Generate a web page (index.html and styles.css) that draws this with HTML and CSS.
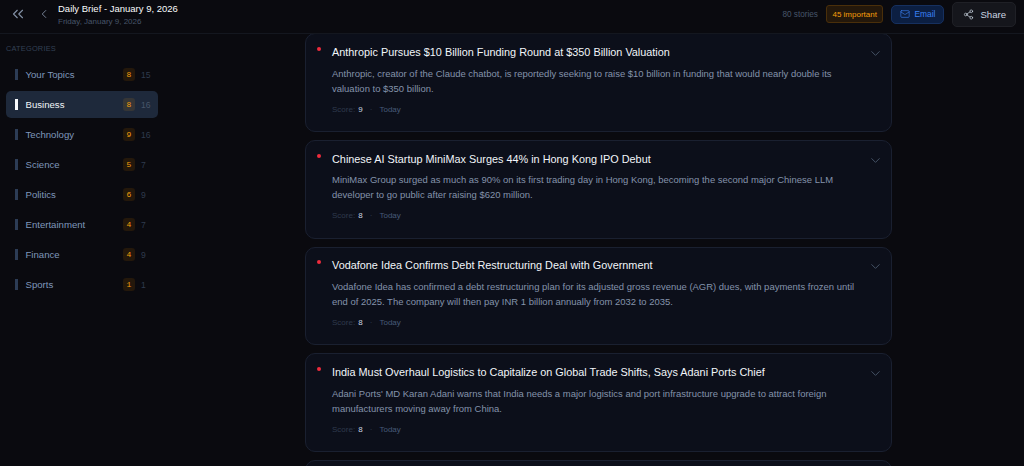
FILE: index.html
```html
<!DOCTYPE html>
<html lang="en">
<head>
    <meta charset="UTF-8">
    <meta name="viewport" content="width=device-width, initial-scale=1.0">
    <title>Daily Brief - January 9, 2026</title>
    <link rel="stylesheet" href="styles.css">
</head>
<body>
    <header class="topbar">
        <div class="topbar-left">
            <button class="nav-btn nav-collapse" aria-label="Collapse">
                <svg width="18" height="18" viewBox="0 0 24 24"><path d="m11 17-5-5 5-5"/><path d="m18 17-5-5 5-5"/></svg>
            </button>
            <button class="nav-btn nav-back" aria-label="Back">
                <svg width="14" height="14" viewBox="0 0 24 24"><path d="m15 18-6-6 6-6"/></svg>
            </button>
            <div class="brief-title">
                <h1>Daily Brief - January 9, 2026</h1>
                <p>Friday, January 9, 2026</p>
            </div>
        </div>
        <div class="topbar-right">
            <span class="story-count">80 stories</span>
            <span class="important-tag">45 important</span>
            <button class="email-btn">
                <svg width="10" height="10" viewBox="0 0 24 24"><rect x="2" y="4" width="20" height="16" rx="2"/><path d="m22 7-8.97 5.7a1.94 1.94 0 0 1-2.06 0L2 7"/></svg>
                Email
            </button>
            <button class="share-btn">
                <svg width="11" height="11" viewBox="0 0 24 24"><circle cx="18" cy="5" r="3"/><circle cx="6" cy="12" r="3"/><circle cx="18" cy="19" r="3"/><path d="m8.59 13.51 6.83 3.98"/><path d="m15.41 6.51-6.82 3.98"/></svg>
                Share
            </button>
        </div>
    </header>

    <div class="layout">
        <aside class="sidebar">
            <h2>CATEGORIES</h2>
            <a class="cat"><i></i><span class="cat-name">Your Topics</span><b>8</b><em>15</em></a>
            <a class="cat active"><i></i><span class="cat-name">Business</span><b>8</b><em>16</em></a>
            <a class="cat"><i></i><span class="cat-name">Technology</span><b>9</b><em>16</em></a>
            <a class="cat"><i></i><span class="cat-name">Science</span><b>5</b><em>7</em></a>
            <a class="cat"><i></i><span class="cat-name">Politics</span><b>6</b><em>9</em></a>
            <a class="cat"><i></i><span class="cat-name">Entertainment</span><b>4</b><em>7</em></a>
            <a class="cat"><i></i><span class="cat-name">Finance</span><b>4</b><em>9</em></a>
            <a class="cat"><i></i><span class="cat-name">Sports</span><b>1</b><em>1</em></a>
        </aside>

        <main class="feed">
            <div class="stories">
                <article class="story">
                    <span class="dot"></span>
                    <div class="story-body">
                        <h3>Anthropic Pursues $10 Billion Funding Round at $350 Billion Valuation</h3>
                        <p>Anthropic, creator of the Claude chatbot, is reportedly seeking to raise $10 billion in funding that would nearly double its valuation to $350 billion.</p>
                        <div class="meta"><span class="score">Score: <b>9</b></span><span class="sep">&middot;</span><span class="when">Today</span></div>
                    </div>
                    <svg class="chevron" width="15" height="15" viewBox="0 0 24 24"><path d="m6 9 6 6 6-6"/></svg>
                </article>
                <article class="story">
                    <span class="dot"></span>
                    <div class="story-body">
                        <h3>Chinese AI Startup MiniMax Surges 44% in Hong Kong IPO Debut</h3>
                        <p>MiniMax Group surged as much as 90% on its first trading day in Hong Kong, becoming the second major Chinese LLM developer to go public after raising $620 million.</p>
                        <div class="meta"><span class="score">Score: <b>8</b></span><span class="sep">&middot;</span><span class="when">Today</span></div>
                    </div>
                    <svg class="chevron" width="15" height="15" viewBox="0 0 24 24"><path d="m6 9 6 6 6-6"/></svg>
                </article>
                <article class="story">
                    <span class="dot"></span>
                    <div class="story-body">
                        <h3>Vodafone Idea Confirms Debt Restructuring Deal with Government</h3>
                        <p>Vodafone Idea has confirmed a debt restructuring plan for its adjusted gross revenue (AGR) dues, with payments frozen until end of 2025. The company will then pay INR 1 billion annually from 2032 to 2035.</p>
                        <div class="meta"><span class="score">Score: <b>8</b></span><span class="sep">&middot;</span><span class="when">Today</span></div>
                    </div>
                    <svg class="chevron" width="15" height="15" viewBox="0 0 24 24"><path d="m6 9 6 6 6-6"/></svg>
                </article>
                <article class="story">
                    <span class="dot"></span>
                    <div class="story-body">
                        <h3>India Must Overhaul Logistics to Capitalize on Global Trade Shifts, Says Adani Ports Chief</h3>
                        <p>Adani Ports' MD Karan Adani warns that India needs a major logistics and port infrastructure upgrade to attract foreign manufacturers moving away from China.</p>
                        <div class="meta"><span class="score">Score: <b>8</b></span><span class="sep">&middot;</span><span class="when">Today</span></div>
                    </div>
                    <svg class="chevron" width="15" height="15" viewBox="0 0 24 24"><path d="m6 9 6 6 6-6"/></svg>
                </article>
                <article class="story story-next"></article>
            </div>
        </main>
    </div>
</body>
</html>
```

FILE: styles.css
```css
* {
    box-sizing: border-box;
}
html, body {
    height: 100%;
}
body {
    margin: 0;
    overflow: hidden;
    display: flex;
    flex-direction: column;
    font-family: "Liberation Sans", Arial, sans-serif;
    background-color: #0a0a0f;
    color: #e2e8f0;
}
svg {
    fill: none;
    stroke: currentColor;
    stroke-width: 1.5;
    stroke-linecap: round;
    stroke-linejoin: round;
    flex-shrink: 0;
}
button {
    font-family: inherit;
    cursor: pointer;
}

/* top bar */
.topbar {
    flex: 0 0 33.5px;
    display: flex;
    justify-content: space-between;
    align-items: center;
    padding: 0 8px 4px 9px;
    background: #0a0a0f;
    border-bottom: 1px solid #14171f;
}
.topbar-left, .topbar-right {
    display: flex;
    align-items: center;
}
.nav-btn {
    display: flex;
    padding: 0;
    border: none;
    background: none;
    color: #8290a5;
}
.nav-collapse {
    margin-right: 10px;
}
.nav-back {
    margin-right: 7px;
}
.brief-title h1 {
    margin: 0;
    font-size: 9.5px;
    line-height: 14px;
    font-weight: 400;
    color: #f8fafc;
}
.brief-title p {
    margin: 0;
    font-size: 8px;
    line-height: 11px;
    color: #475569;
}
.story-count {
    margin-right: 8px;
    font-size: 8.2px;
    color: #475569;
}
.important-tag {
    display: flex;
    align-items: center;
    height: 18px;
    padding: 0 5.5px;
    margin-right: 8px;
    border: 1px solid #4a2f0a;
    border-radius: 3px;
    background: #24180b;
    font-size: 8px;
    color: #f59e0b;
}
.email-btn {
    display: flex;
    align-items: center;
    gap: 4px;
    height: 19px;
    padding: 0 8px;
    margin-right: 8px;
    border: 1px solid #16305f;
    border-radius: 5px;
    background: #0c1f42;
    font-size: 8.4px;
    color: #3b82f6;
}
.share-btn {
    display: flex;
    align-items: center;
    gap: 6px;
    height: 25px;
    padding: 0 9px 0 10px;
    border: 1px solid #1f2026;
    border-radius: 5px;
    background: #15161c;
    font-size: 9.6px;
    color: #cbd5e1;
}

/* layout */
.layout {
    flex: 1;
    display: flex;
    min-height: 0;
}
.sidebar {
    flex: 0 0 173px;
    padding: 10px 15px 0 6px;
}
.sidebar h2 {
    margin: 0 0 7.5px;
    font-size: 7.4px;
    line-height: 10px;
    font-weight: 400;
    letter-spacing: 0.2px;
    color: #334155;
}
.cat {
    display: flex;
    align-items: center;
    height: 27px;
    margin-bottom: 3px;
    padding: 0 7px 0 9px;
    border-radius: 5px;
    font-size: 9.6px;
    color: #7f97bb;
}
.cat i {
    width: 2.5px;
    height: 11px;
    margin-right: 8px;
    background: #2c3c55;
}
.cat-name {
    flex: 1;
}
.cat b {
    display: flex;
    justify-content: center;
    align-items: center;
    width: 12px;
    height: 13px;
    margin-right: 6px;
    border-radius: 3px;
    background: #24180b;
    font-family: "Liberation Mono", monospace;
    font-size: 8px;
    font-weight: 400;
    color: #f59e0b;
}
.cat em {
    width: 10px;
    font-style: normal;
    font-size: 8.6px;
    color: #2f3a4d;
}
.cat.active {
    background: #1e293b;
    color: #f1f5f9;
}
.cat.active i {
    background: #f8fafc;
}
.cat.active b {
    background: #363636;
}
.cat.active em {
    color: #475569;
}

/* feed */
.feed {
    flex: 1;
    display: flex;
    justify-content: center;
    overflow: hidden;
}
.stories {
    width: 587px;
    margin-top: -0.2px;
}
.story {
    display: flex;
    height: 98.7px;
    margin-bottom: 8px;
    padding: 9.5px 8px 0 11px;
    border: 1px solid #1a2030;
    border-radius: 10px;
    background: #0c0f1a;
}
.dot {
    flex-shrink: 0;
    width: 4px;
    height: 4px;
    margin-top: 3px;
    margin-right: 11px;
    border-radius: 50%;
    background: #ef2b3c;
}
.story-body {
    flex: 1;
    min-width: 0;
    padding-right: 8px;
}
.story h3 {
    margin: 0 0 5.9px;
    font-size: 10.87px;
    line-height: 16px;
    font-weight: 400;
    color: #f1f5f9;
}
.story p {
    margin: 0 0 8px;
    font-size: 9.48px;
    line-height: 15px;
    color: #8493ab;
}
.meta {
    display: flex;
    align-items: center;
    font-size: 8px;
    line-height: 12px;
}
.score {
    color: #2f3a4d;
}
.score b {
    margin-left: 1px;
    font-weight: 400;
    color: #cbd5e1;
}
.sep {
    margin: 0 7px;
    color: #334155;
}
.when {
    color: #475a78;
}
.chevron {
    margin-top: 2px;
    color: #475569;
}
```
